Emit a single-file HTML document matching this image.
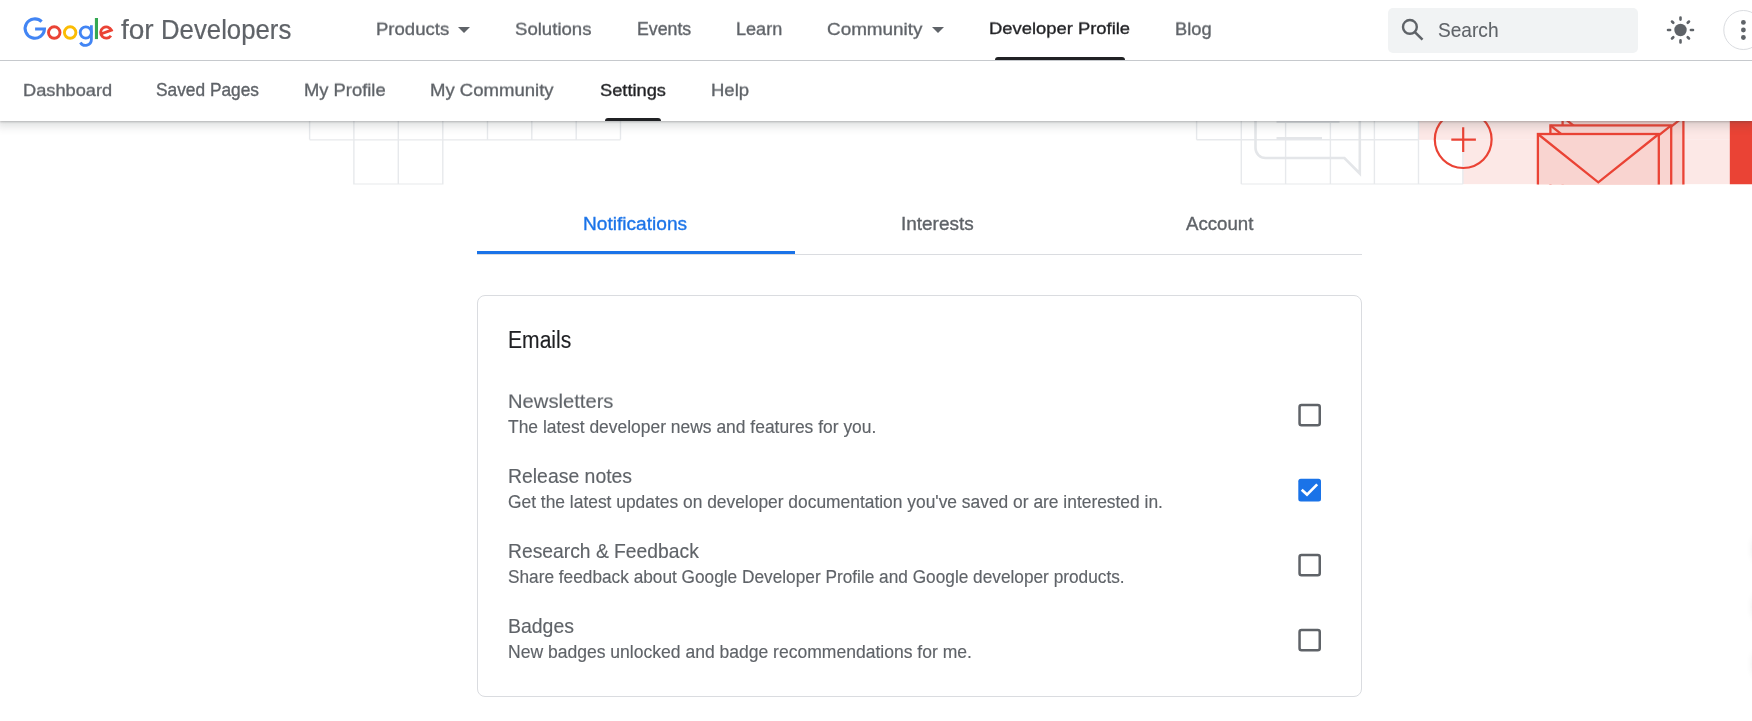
<!DOCTYPE html>
<html><head><meta charset="utf-8"><title>Settings | Google for Developers</title>
<style>
html,body{margin:0;padding:0;background:#fff;}
body{width:1752px;height:721px;overflow:hidden;position:relative;font-family:"Liberation Sans",sans-serif;}
.t{position:absolute;white-space:nowrap;font-weight:400;}
.abs{position:absolute;}
#hero{position:absolute;left:0;top:0;z-index:1;}
#nav1{position:absolute;left:0;top:0;width:1752px;height:60px;background:#fff;border-bottom:1px solid #c6c9cd;z-index:3;}
#nav2{position:absolute;left:0;top:61px;width:1752px;height:60px;background:#fff;z-index:2;
  box-shadow:0 1px 2px 0 rgba(60,64,67,.3),0 3px 8px 3px rgba(60,64,67,.15);}
.t{z-index:5;will-change:transform;}
#search{position:absolute;left:1388px;top:8px;width:250px;height:45px;background:#f1f3f4;border-radius:5px;z-index:4;}
.ind{position:absolute;background:#202124;border-radius:3px 3px 0 0;z-index:4;}
#card{position:absolute;left:477px;top:295px;width:883px;height:400px;border:1px solid #dadce0;border-radius:8px;}
#tabline{position:absolute;left:477px;top:254px;width:885px;height:1px;background:#dadce0;}
#tabind{position:absolute;left:477px;top:251px;width:318px;height:3px;background:#1a73e8;}

</style></head><body>
<svg id="hero" width="1752" height="185" viewBox="0 0 1752 185">
 <defs><clipPath id="hc"><rect x="0" y="0" width="1752" height="184.5"/></clipPath></defs>
 <g clip-path="url(#hc)">
  <rect x="1418.5" y="60" width="311.3" height="79.8" fill="#fce8e6"/>
  <rect x="1462.9" y="139.8" width="266.9" height="44.5" fill="#fce8e6"/>
  <rect x="1729.8" y="60" width="30" height="124.5" fill="#ea4335"/>
  <g stroke="#e7e9ec" stroke-width="1.4" fill="none">
   <path d="M309.6 60V139.6M353.9 60V185M398.3 60V185M442.8 60V185M487.5 60V139.6M531.8 60V139.6M576.2 60V139.6M620.5 60V139.6M309.6 139.9H620.5M353.9 184.3H442.8"/>
   <path d="M1196.6 60V139.8M1241.3 60V184.2M1285.6 60V184.2M1330.4 60V184.2M1374.4 60V184.2M1418.5 60V184.2M1462.9 139.8V184.2M1196.6 139.8H1418.5M1241.3 184.2H1462.9"/>
  </g>
  <g stroke="#e4e6e9" stroke-width="2.6" fill="none">
   <path d="M1255.5 60V148A10 10 0 0 0 1265.5 158H1344.4L1359.8 173.5V60"/>
   <path d="M1276.5 138.3H1322M1276.5 121.8H1339.5"/>
  </g>
  <g stroke="#ea4335" stroke-width="2.2" fill="none">
   <circle cx="1463.2" cy="139.6" r="28.4"/>
   <path d="M1451.3 139.6H1475.9M1463.2 127.3V152"/>
  </g>
  <g stroke="#ea4335" stroke-width="2.3" fill="#f9d4d0" stroke-linejoin="miter">
   <rect x="1562.6" y="116.8" width="120.8" height="100"/>
   <path d="M1562.6 116.8L1623 165.1L1683.4 116.8" fill="none"/>
   <rect x="1550.4" y="125.4" width="120.8" height="100"/>
   <path d="M1550.4 125.4L1610.8 173.7L1671.2 125.4" fill="none"/>
   <rect x="1537.9" y="134" width="120.9" height="100"/>
   <path d="M1537.9 134L1598.3 182.3L1658.8 134" fill="none"/>
  </g>
 </g>
</svg>
<div id="nav1"></div>
<div id="nav2"></div>
<svg class="abs" style="left:0;top:0;z-index:6" width="120" height="60" viewBox="0 0 120 60">
 <path d="M41.62 21.68A9.65 9.65 0 1 0 44.45 29H35.1" stroke="#4285f4" stroke-width="3.1" fill="none"/>
 <circle cx="54.25" cy="32.55" r="5.75" stroke="#ea4335" stroke-width="2.9" fill="none"/>
 <circle cx="70.15" cy="32.55" r="5.75" stroke="#fbbc04" stroke-width="2.9" fill="none"/>
 <circle cx="85.8" cy="32.55" r="5.6" stroke="#4285f4" stroke-width="2.8" fill="none"/>
 <path d="M91.4 25.3V39.5A5.9 5.9 0 0 1 80.4 42.45" stroke="#4285f4" stroke-width="2.8" fill="none"/>
 <rect x="94.9" y="18" width="3.1" height="21.1" fill="#34a853"/>
 <path d="M100.84 34.01L111.42 30.16A5.65 5.65 0 1 0 110.93 35.79" stroke="#ea4335" stroke-width="2.8" fill="none"/>
</svg>
<svg class="abs" style="left:448px;top:17px;z-index:6" width="500" height="20" viewBox="448 17 500 20">
 <path d="M458 27L464 33L470 27Z" fill="#5f6368"/>
 <path d="M932 27L938 33L944 27Z" fill="#5f6368"/>
</svg>
<div class="ind" style="left:995px;top:57px;width:130px;height:3px;"></div>
<div class="ind" style="left:605px;top:118px;width:56px;height:3px;"></div>
<div id="search"></div>
<svg class="abs" style="left:1390px;top:10px;z-index:6" width="40" height="40" viewBox="1390 10 40 40">
 <circle cx="1409.9" cy="26.9" r="6.9" stroke="#5f6368" stroke-width="2.4" fill="none"/>
 <path d="M1414.6 31.8L1422.5 39.7" stroke="#5f6368" stroke-width="2.6" fill="none"/>
</svg>
<svg class="abs" style="left:1660px;top:10px;z-index:6" width="92" height="42" viewBox="1660 10 92 42">
 <circle cx="1680.5" cy="30" r="6.2" fill="#5f6368"/>
 <g stroke="#5f6368" stroke-width="2.6" stroke-linecap="round">
  <path d="M1690.90 30.00L1693.00 30.00M1687.71 37.21L1688.99 38.49M1680.50 40.40L1680.50 42.50M1673.29 37.21L1672.01 38.49M1670.10 30.00L1668.00 30.00M1673.29 22.79L1672.01 21.51M1680.50 19.60L1680.50 17.50M1687.71 22.79L1688.99 21.51"/>
 </g>
 <circle cx="1743.3" cy="30" r="19.5" stroke="#dadce0" stroke-width="1" fill="#fff"/>
 <circle cx="1743.4" cy="22.4" r="2.4" fill="#5f6368"/>
 <circle cx="1743.4" cy="30" r="2.4" fill="#5f6368"/>
 <circle cx="1743.4" cy="37.5" r="2.4" fill="#5f6368"/>
</svg>
<div id="tabline"></div>
<div id="tabind"></div>
<div id="card"></div>
<svg class="abs" style="left:0;top:0;z-index:6" width="1752" height="721" viewBox="0 0 1752 721">
 <g fill="none" stroke="#5f6368" stroke-width="2.5">
  <rect x="1299.55" y="405.05" width="20.2" height="20.2" rx="2"/>
  <rect x="1299.55" y="555.05" width="20.2" height="20.2" rx="2"/>
  <rect x="1299.55" y="630.05" width="20.2" height="20.2" rx="2"/>
 </g>
 <rect x="1298.3" y="478.8" width="22.7" height="22.7" rx="2.5" fill="#1a73e8"/>
 <path d="M1301.7 489.7L1307 494.6L1317.2 484.4" stroke="#fff" stroke-width="2.7" fill="none"/>
</svg>
<div class="abs" style="left:1753px;top:530px;width:40px;height:38px;border-radius:19px;background:#fff;box-shadow:0 0 7px 0 rgba(60,64,67,.13)"></div>
<div class="abs" style="left:1753px;top:588px;width:40px;height:38px;border-radius:19px;background:#fff;box-shadow:0 0 7px 0 rgba(60,64,67,.13)"></div>
<div class="abs" style="left:1753px;top:645px;width:40px;height:38px;border-radius:19px;background:#fff;box-shadow:0 0 7px 0 rgba(60,64,67,.13)"></div>

<div class="t" style="left:375.90px;top:17.57px;font-size:18.56px;line-height:22px;color:#5f6368;transform:scaleY(0.9494);transform-origin:0 17.43px;-webkit-text-stroke:0.35px #5f6368;">Products</div>
<div class="t" style="left:515.30px;top:17.55px;font-size:18.60px;line-height:22px;color:#5f6368;transform:scaleY(0.9470);transform-origin:0 17.45px;-webkit-text-stroke:0.35px #5f6368;">Solutions</div>
<div class="t" style="left:636.50px;top:18.85px;font-size:17.74px;line-height:21px;color:#5f6368;transform:scaleY(0.9930);transform-origin:0 16.65px;-webkit-text-stroke:0.35px #5f6368;">Events</div>
<div class="t" style="left:735.90px;top:18.23px;font-size:18.08px;line-height:22px;color:#5f6368;transform:scaleY(0.9744);transform-origin:0 17.27px;-webkit-text-stroke:0.35px #5f6368;">Learn</div>
<div class="t" style="left:826.50px;top:16.95px;font-size:18.89px;line-height:23px;color:#5f6368;transform:scaleY(0.9327);transform-origin:0 18.05px;-webkit-text-stroke:0.35px #5f6368;">Community</div>
<div class="t" style="left:989.40px;top:17.12px;font-size:18.40px;line-height:22px;color:#202124;transform:scaleY(0.8892);transform-origin:0 17.38px;-webkit-text-stroke:0.35px #202124;">Developer Profile</div>
<div class="t" style="left:1175.00px;top:18.17px;font-size:18.27px;line-height:22px;color:#5f6368;transform:scaleY(0.9641);transform-origin:0 17.33px;-webkit-text-stroke:0.35px #5f6368;">Blog</div>
<div class="t" style="left:22.90px;top:78.58px;font-size:18.24px;line-height:22px;color:#5f6368;transform:scaleY(0.9210);transform-origin:0 17.32px;-webkit-text-stroke:0.35px #5f6368;">Dashboard</div>
<div class="t" style="left:156.20px;top:80.20px;font-size:17.32px;line-height:21px;color:#5f6368;transform:scaleY(1.0096);transform-origin:0 16.50px;-webkit-text-stroke:0.35px #5f6368;">Saved Pages</div>
<div class="t" style="left:304.20px;top:78.53px;font-size:18.36px;line-height:22px;color:#5f6368;transform:scaleY(0.9522);transform-origin:0 17.37px;-webkit-text-stroke:0.35px #5f6368;">My Profile</div>
<div class="t" style="left:430.30px;top:79.27px;font-size:18.54px;line-height:22px;color:#5f6368;transform:scaleY(0.9431);transform-origin:0 17.43px;-webkit-text-stroke:0.35px #5f6368;">My Community</div>
<div class="t" style="left:599.50px;top:78.57px;font-size:18.27px;line-height:22px;color:#202124;transform:scaleY(0.9194);transform-origin:0 17.33px;-webkit-text-stroke:0.35px #202124;">Settings</div>
<div class="t" style="left:710.50px;top:79.29px;font-size:18.50px;line-height:22px;color:#5f6368;transform:scaleY(0.9450);transform-origin:0 17.41px;-webkit-text-stroke:0.35px #5f6368;">Help</div>
<div class="t" style="left:1437.70px;top:18.88px;font-size:19.11px;line-height:23px;color:#5f6368;transform:scaleY(1.1044);transform-origin:0 18.12px;-webkit-text-stroke:0.10px #5f6368;">Search</div>
<div class="t" style="left:120.80px;top:12.69px;font-size:28.02px;line-height:34px;color:#5f6368;transform:scaleY(1.0164);transform-origin:0 26.71px;-webkit-text-stroke:0.20px #5f6368;">for</div>
<div class="t" style="left:160.80px;top:14.97px;font-size:25.77px;line-height:31px;color:#5f6368;transform:scaleY(1.0887);transform-origin:0 24.43px;-webkit-text-stroke:0.20px #5f6368;">Developers</div>
<div class="t" style="left:583.30px;top:212.47px;font-size:19.12px;line-height:23px;color:#1a73e8;transform:scaleY(0.9972);transform-origin:0 18.13px;-webkit-text-stroke:0.35px #1a73e8;">Notifications</div>
<div class="t" style="left:900.70px;top:211.72px;font-size:18.97px;line-height:23px;color:#5f6368;transform:scaleY(1.0047);transform-origin:0 18.08px;-webkit-text-stroke:0.35px #5f6368;">Interests</div>
<div class="t" style="left:1186.40px;top:213.13px;font-size:18.65px;line-height:22px;color:#5f6368;transform:scaleY(1.0219);transform-origin:0 17.47px;-webkit-text-stroke:0.35px #5f6368;">Account</div>
<div class="t" style="left:508.10px;top:328.18px;font-size:21.10px;line-height:25px;color:#202124;transform:scaleY(1.0965);transform-origin:0 19.82px;-webkit-text-stroke:0.12px #202124;">Emails</div>
<div class="t" style="left:508.40px;top:388.70px;font-size:20.20px;line-height:24px;color:#5f6368;transform:scaleY(0.9648);transform-origin:0 19.00px;-webkit-text-stroke:0.15px #5f6368;">Newsletters</div>
<div class="t" style="left:507.80px;top:416.95px;font-size:17.45px;line-height:21px;color:#5f6368;transform:scaleY(1.0335);transform-origin:0 16.55px;-webkit-text-stroke:0.15px #5f6368;">The latest developer news and features for you.</div>
<div class="t" style="left:508.40px;top:465.27px;font-size:19.41px;line-height:23px;color:#5f6368;transform:scaleY(1.0039);transform-origin:0 18.23px;-webkit-text-stroke:0.15px #5f6368;">Release notes</div>
<div class="t" style="left:507.90px;top:491.97px;font-size:17.40px;line-height:21px;color:#5f6368;transform:scaleY(1.0369);transform-origin:0 16.53px;-webkit-text-stroke:0.15px #5f6368;">Get the latest updates on developer documentation you've saved or are interested in.</div>
<div class="t" style="left:508.40px;top:539.51px;font-size:19.30px;line-height:23px;color:#5f6368;transform:scaleY(1.0097);transform-origin:0 18.19px;-webkit-text-stroke:0.15px #5f6368;">Research &amp; Feedback</div>
<div class="t" style="left:507.90px;top:566.52px;font-size:17.25px;line-height:21px;color:#5f6368;transform:scaleY(1.0456);transform-origin:0 16.48px;-webkit-text-stroke:0.15px #5f6368;">Share feedback about Google Developer Profile and Google developer products.</div>
<div class="t" style="left:508.40px;top:615.25px;font-size:19.47px;line-height:23px;color:#5f6368;transform:scaleY(1.0011);transform-origin:0 18.25px;-webkit-text-stroke:0.15px #5f6368;">Badges</div>
<div class="t" style="left:507.90px;top:641.92px;font-size:17.54px;line-height:21px;color:#5f6368;transform:scaleY(1.0283);transform-origin:0 16.58px;-webkit-text-stroke:0.15px #5f6368;">New badges unlocked and badge recommendations for me.</div>
</body></html>
